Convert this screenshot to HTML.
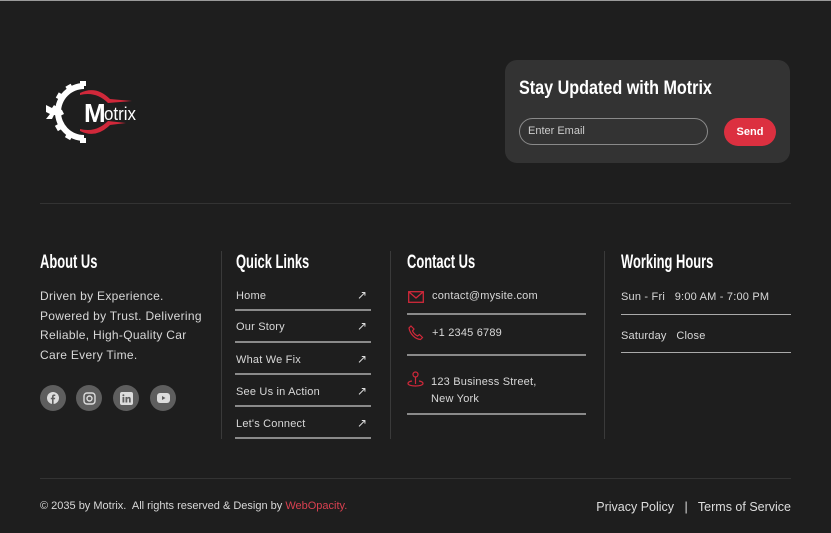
<!DOCTYPE html>
<html><head><meta charset="utf-8">
<style>
*{margin:0;padding:0;box-sizing:border-box}
body{width:831px;height:533px;background:#1e1e1e;font-family:"Liberation Sans",sans-serif;color:#d6d6d6;position:relative;overflow:hidden;border-top:1px solid #9a9a9a}
.a{position:absolute}
.h{font-family:"Liberation Sans Narrow","Liberation Sans",sans-serif;font-weight:bold;color:#fff;font-size:19px;transform:scale(0.68,1.0);transform-origin:left top;white-space:nowrap}
.t{font-size:11px;color:#d8d8d8;letter-spacing:0.2px}
.ln{position:absolute;height:2px;background:#8a8a8a}
.vl{position:absolute;width:1px;background:#3a3a3a}
.soc{position:absolute;width:26px;height:26px;border-radius:50%;background:#5e5e5e;top:384px;display:flex;align-items:center;justify-content:center}
.arr{position:absolute;left:357px;font-size:12px;color:#ddd}
</style></head><body>
<svg class="a" style="left:44px;top:80px" width="96" height="62" viewBox="0 0 96 62">
<g fill="#fff">
<path d="M40 2 A29 29 0 1 0 40 60 L40 54 A23 23 0 1 1 40 8 Z"/>
<rect x="36" y="0" width="6" height="5"/><rect x="22" y="4" width="6" height="5" transform="rotate(-30 25 6)"/>
<rect x="12" y="13" width="6" height="5" transform="rotate(-60 15 15)"/>
<rect x="12" y="44" width="6" height="5" transform="rotate(60 15 46)"/>
<rect x="22" y="53" width="6" height="5" transform="rotate(30 25 55)"/><rect x="36" y="57" width="6" height="5"/>
<path d="M2 24 L8 27 L10 24 L14 27 L18 29 L20 33 L16 35 L10 34 L8 38 L2 38 L6 33 L2 31 Z"/>
</g>
<path d="M36 12 Q52 4 66 18 L88 20 L64 22 Q52 10 36 14Z" fill="#d0283a"/>
<path d="M36 50 Q52 58 66 44 L82 42 L64 40 Q52 52 36 48Z" fill="#d0283a"/>
<text x="40" y="41" fill="#fff" font-family="Liberation Sans Narrow,Liberation Sans,sans-serif" font-weight="bold" font-size="26">M</text>
<text x="60" y="39" fill="#fff" font-family="Liberation Sans Narrow,Liberation Sans,sans-serif" font-size="18" textLength="32" lengthAdjust="spacingAndGlyphs">otrix</text>
</svg>

<div class="a" style="left:505px;top:59px;width:285px;height:103px;background:#333;border-radius:12px"></div>
<div class="a h" style="left:519px;top:77px;font-size:19px;transform:scale(0.85,1)">Stay Updated with Motrix</div>
<div class="a" style="left:519px;top:117px;width:189px;height:27px;border:1px solid #8a8a8a;border-radius:14px;font-size:11px;color:#ccc;padding:6px 8px">Enter Email</div>
<div class="a" style="left:724px;top:117px;width:52px;height:28px;background:#dc3040;border-radius:14px;color:#fff;font-size:11px;font-weight:bold;text-align:center;line-height:28px">Send</div>

<div class="a" style="left:40px;top:202px;width:751px;height:1px;background:#333"></div>

<div class="a h" style="left:40px;top:251px">About Us</div>
<div class="a" style="left:40px;top:286px;width:170px;font-size:12px;line-height:19.5px;color:#d8d8d8;letter-spacing:0.3px">Driven by Experience. Powered by Trust. Delivering Reliable, High-Quality Car Care Every Time.</div>
<div class="soc" style="left:40px"><svg width="12" height="12" viewBox="0 0 12 12"><circle cx="6" cy="6" r="6" fill="#ddd"/><path d="M6.6 12V7.3H8L8.2 5.7H6.6V4.8c0-.5.2-.8.8-.8h.9V2.6c-.3 0-.8-.1-1.3-.1-1.3 0-2 .8-2 2.1v1.1H3.8v1.6H5V12z" fill="#5e5e5e"/></svg></div>
<div class="soc" style="left:76px"><svg width="13" height="13" viewBox="0 0 13 13" fill="none" stroke="#ddd" stroke-width="1.4"><rect x="1" y="1" width="11" height="11" rx="3"/><circle cx="6.5" cy="6.5" r="2.5"/></svg></div>
<div class="soc" style="left:113px"><svg width="13" height="13" viewBox="0 0 13 13"><rect width="13" height="13" rx="2" fill="#ddd"/><path d="M2.5 5h1.8v5.5H2.5zM5.5 5h1.7v.8c.3-.5.9-.9 1.7-.9 1.4 0 1.8.9 1.8 2.2v3.4H9V7.5c0-.7-.2-1.100-.8-1.1s-.9.5-.9 1.1v3H5.5z" fill="#5e5e5e"/><circle cx="3.4" cy="3.2" r="1" fill="#5e5e5e"/></svg></div>
<div class="soc" style="left:150px"><svg width="13" height="10" viewBox="0 0 13 10"><rect width="13" height="10" rx="3" fill="#ddd"/><path d="M5 3l3.5 2L5 7z" fill="#5e5e5e"/></svg></div>

<div class="vl" style="left:221px;top:250px;height:188px"></div>
<div class="a h" style="left:236px;top:251px">Quick Links</div>
<div class="a t" style="left:236px;top:289px">Home</div><div class="arr" style="top:287px">↗</div><div class="ln" style="left:235px;top:308px;width:136px"></div>
<div class="a t" style="left:236px;top:320px">Our Story</div><div class="arr" style="top:318px">↗</div><div class="ln" style="left:235px;top:340px;width:136px"></div>
<div class="a t" style="left:236px;top:353px">What We Fix</div><div class="arr" style="top:351px">↗</div><div class="ln" style="left:235px;top:372px;width:136px"></div>
<div class="a t" style="left:236px;top:385px">See Us in Action</div><div class="arr" style="top:383px">↗</div><div class="ln" style="left:235px;top:404px;width:136px"></div>
<div class="a t" style="left:236px;top:417px">Let's Connect</div><div class="arr" style="top:415px">↗</div><div class="ln" style="left:235px;top:436px;width:136px"></div>

<div class="vl" style="left:390px;top:250px;height:188px"></div>
<div class="a h" style="left:407px;top:251px">Contact Us</div>
<svg class="a" style="left:408px;top:290px" width="16" height="12" viewBox="0 0 16 12" fill="none" stroke="#d0283a" stroke-width="1.3"><rect x="0.7" y="0.7" width="14.6" height="10.6"/><path d="M1 1l7 6 7-6"/></svg>
<div class="a t" style="left:432px;top:289px">contact@mysite.com</div>
<div class="ln" style="left:407px;top:312px;width:179px"></div>
<svg class="a" style="left:408px;top:324px" width="16" height="16" viewBox="0 0 16 16" fill="none" stroke="#d0283a" stroke-width="1.2"><path d="M3 1l3 3-1.5 2c1 2 3 4 5 5l2-1.5 3 3-2 2C7 14 2 9 1 3z"/></svg>
<div class="a t" style="left:432px;top:326px">+1 2345 6789</div>
<div class="ln" style="left:407px;top:353px;width:179px"></div>
<svg class="a" style="left:407px;top:370px" width="17" height="17" viewBox="0 0 17 17" fill="none" stroke="#d0283a" stroke-width="1.2"><circle cx="8.5" cy="3.5" r="2.5"/><path d="M8.5 6v7M5 10C2 10.5 1 11.5 1 12.5c0 1.5 3.4 2.5 7.5 2.5S16 14 16 12.5c0-1-1-2-4-2.5"/></svg>
<div class="a t" style="left:431px;top:373px;line-height:17px">123 Business Street,<br>New York</div>
<div class="ln" style="left:407px;top:412px;width:179px"></div>

<div class="vl" style="left:604px;top:250px;height:188px"></div>
<div class="a h" style="left:621px;top:251px">Working Hours</div>
<div class="a t" style="left:621px;top:290px">Sun - Fri &nbsp;&nbsp;9:00 AM - 7:00 PM</div>
<div class="ln" style="left:621px;top:313px;width:170px;height:1px;background:#aaa"></div>
<div class="a t" style="left:621px;top:329px">Saturday &nbsp;&nbsp;Close</div>
<div class="ln" style="left:621px;top:351px;width:170px;height:1px;background:#aaa"></div>

<div class="a" style="left:40px;top:477px;width:751px;height:1px;background:#333"></div>
<div class="a" style="left:40px;top:499px;font-size:11px;color:#d8d8d8">© 2035 by Motrix.&nbsp; All rights reserved &amp; Design by <span style="color:#d84050">WebOpacity.</span></div>
<div class="a" style="right:40px;top:499px;font-size:12.5px;color:#ddd">Privacy Policy &nbsp;&nbsp;|&nbsp;&nbsp; Terms of Service</div>
</body></html>
